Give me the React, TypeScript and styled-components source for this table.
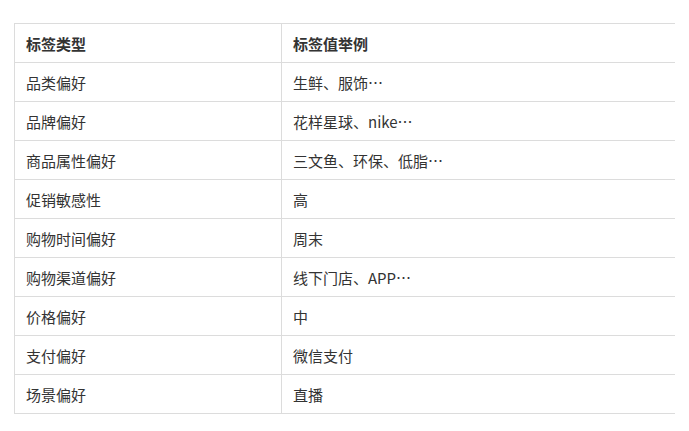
import { createGlobalStyle, styled } from 'styled-components'

const rows = [
  ['品类偏好', '生鲜、服饰⋯'],
  ['品牌偏好', '花样星球、nike⋯'],
  ['商品属性偏好', '三文鱼、环保、低脂⋯'],
  ['促销敏感性', '高'],
  ['购物时间偏好', '周末'],
  ['购物渠道偏好', '线下门店、APP⋯'],
  ['价格偏好', '中'],
  ['支付偏好', '微信支付'],
  ['场景偏好', '直播'],
]

const GlobalStyle = createGlobalStyle`
  body {
    margin: 0;
    background: #fff;
    font-family: "Noto Sans CJK SC", "Noto Sans", sans-serif;
  }
`

const App = () => {
  return (
    <Page lang="zh-CN">
      <GlobalStyle />
      <Table>
        <thead>
          <tr>
            <Th>标签类型</Th>
            <Th>标签值举例</Th>
          </tr>
        </thead>
        <tbody>
          {rows.map(([type, value]) => (
            <tr key={type}>
              <Td>{type}</Td>
              <Td>{value}</Td>
            </tr>
          ))}
        </tbody>
      </Table>
    </Page>
  )
}

const Page = styled.div`
  padding: 23px 14px 0 14px;
`

const Table = styled.table`
  width: 661px;
  border-collapse: collapse;
  table-layout: fixed;
  color: #333;
  font-size: 15px;

  th:first-child,
  td:first-child {
    width: 244px;
    border-left: 1px solid #dcdcdc;
    border-right: 1px solid #dcdcdc;
  }
`

const Th = styled.th`
  height: 38px;
  padding: 0 11px;
  text-align: left;
  font-weight: 600;
  border-top: 1px solid #dcdcdc;
  border-bottom: 1px solid #dcdcdc;
`

const Td = styled.td`
  height: 38px;
  padding: 0 11px;
  border-bottom: 1px solid #dcdcdc;
`

export default App
